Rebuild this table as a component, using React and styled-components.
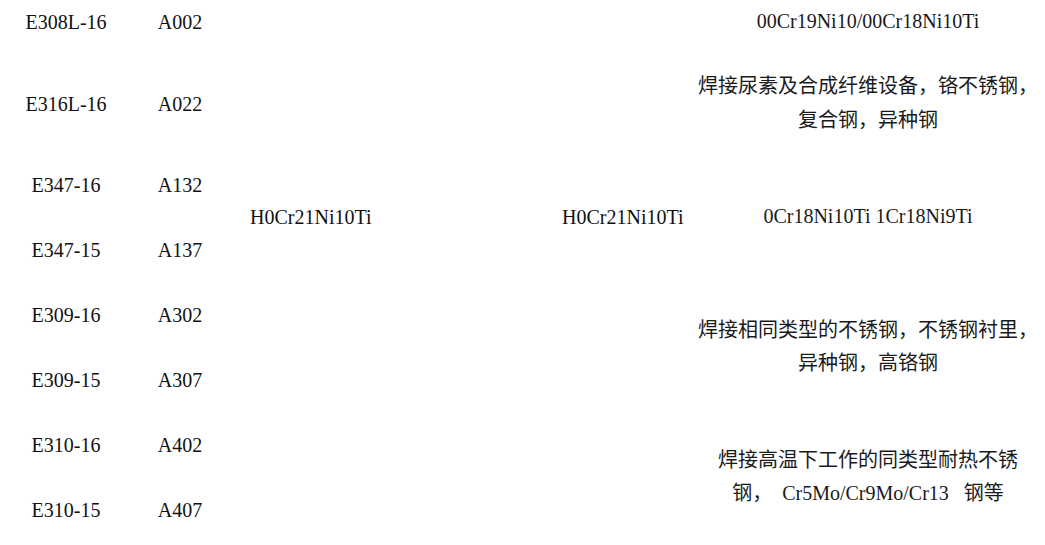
import React from 'react';
import styled, { createGlobalStyle } from 'styled-components';

const Global = createGlobalStyle`
    html, body {
        margin: 0;
        padding: 0;
        background: #fff;
    }
    body {
        width: 1045px;
        height: 545px;
        overflow: hidden;
    }
`;

const Table = styled.table`
    margin-top: -12px;
    width: 1045px;
    border-collapse: collapse;
    table-layout: fixed;
    font-family: "Liberation Serif", "Noto Sans CJK SC", serif;
    font-size: 20px;
    line-height: 34px;
    color: #111;
`;

const Col = styled.col`
    width: ${(p) => p.$w}px;
`;

const Row = styled.tr`
    height: ${(p) => p.$h || 65}px;
`;

const Cell = styled.td`
    padding: 0 0 0 ${(p) => p.$pad || 0}px;
    text-align: ${(p) => p.$align || 'center'};
    vertical-align: middle;
    white-space: nowrap;
`;

const Note = styled(Cell)`
    line-height: 33.5px;
    color: #1a1a1a;
`;

const widths = [132, 96, 314, 149, 354];

const rows = [
    { code: 'E308L-16', grade: 'A002', h: 67 },
    { code: 'E316L-16', grade: 'A022', h: 97 },
    { code: 'E347-16', grade: 'A132' },
    { code: 'E347-15', grade: 'A137' },
    { code: 'E309-16', grade: 'A302' },
    { code: 'E309-15', grade: 'A307' },
    { code: 'E310-16', grade: 'A402' },
    { code: 'E310-15', grade: 'A407' },
];

// 跨行的后三列，key 为起始行
const spans = {
    0: { wire: '', core: '', use: <>00Cr19Ni10/00Cr18Ni10Ti</> },
    1: { wire: '', core: '', use: <>焊接尿素及合成纤维设备，铬不锈钢，<br />复合钢，异种钢</> },
    2: { wire: 'H0Cr21Ni10Ti', core: 'H0Cr21Ni10Ti', use: <>0Cr18Ni10Ti 1Cr18Ni9Ti</>, rs: 2 },
    4: { wire: '', core: '', use: <>焊接相同类型的不锈钢，不锈钢衬里，<br />异种钢，高铬钢</>, rs: 2 },
    6: { wire: '', core: '', use: <>焊接高温下工作的同类型耐热不锈<br />钢，&nbsp;&nbsp;Cr5Mo/Cr9Mo/Cr13&nbsp;&nbsp;&nbsp;钢等</>, rs: 2 },
};

export default function App() {
    return (
        <>
            <Global />
            <Table>
                <colgroup>
                    {widths.map((w, i) => <Col key={i} $w={w} />)}
                </colgroup>
                <tbody>
                    {rows.map((r, i) => {
                        const s = spans[i];
                        return (
                            <Row key={r.code} $h={r.h}>
                                <Cell>{r.code}</Cell>
                                <Cell>{r.grade}</Cell>
                                {s && (
                                    <>
                                        <Cell rowSpan={s.rs || 1} $align="left" $pad={22}>{s.wire}</Cell>
                                        <Cell rowSpan={s.rs || 1} $align="left" $pad={20}>{s.core}</Cell>
                                        <Note rowSpan={s.rs || 1}>{s.use}</Note>
                                    </>
                                )}
                            </Row>
                        );
                    })}
                </tbody>
            </Table>
        </>
    );
}
